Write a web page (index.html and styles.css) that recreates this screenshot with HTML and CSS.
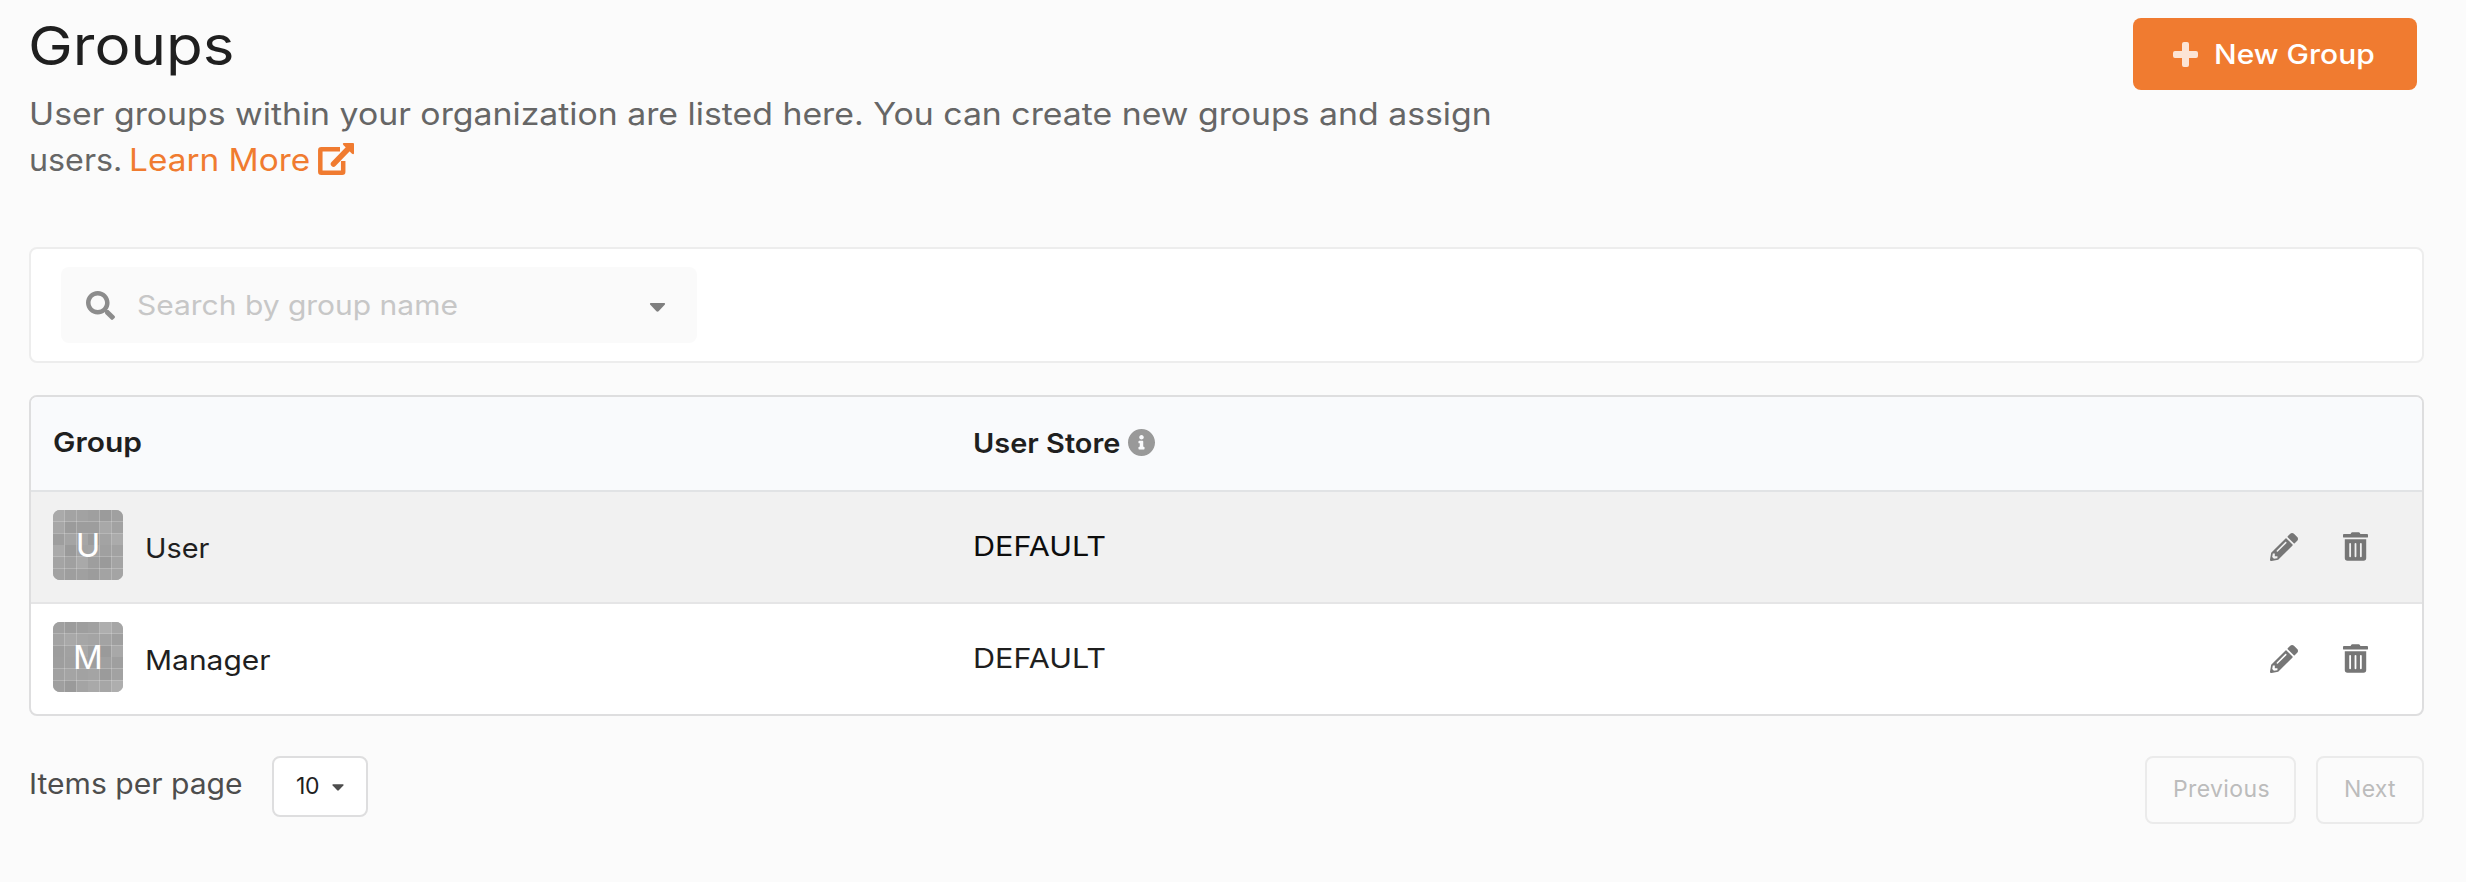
FILE: index.html
```html
<!DOCTYPE html>
<html lang="en">
<head>
<meta charset="utf-8">
<title>Groups</title>
<link rel="stylesheet" href="styles.css">
</head>
<body>
<svg class="defs" width="0" height="0" aria-hidden="true">
  <symbol id="pencil" viewBox="0 0 512 512"><path d="M497.9 142.1l-46.1 46.1c-4.7 4.7-12.3 4.7-17 0l-111-111c-4.7-4.7-4.7-12.3 0-17l46.1-46.1c18.7-18.7 49.1-18.7 67.9 0l60.1 60.1c18.8 18.7 18.8 49.1 0 67.9zM284.2 99.8L21.6 362.4.4 483.9c-2.9 16.4 11.4 30.6 27.8 27.8l121.5-21.3 262.6-262.6c4.7-4.7 4.7-12.3 0-17l-111-111c-4.8-4.7-12.4-4.7-17.1 0zM124.1 339.9c-5.5-5.5-5.5-14.3 0-19.8l154-154c5.5-5.5 14.3-5.5 19.8 0s5.5 14.3 0 19.8l-154 154c-5.5 5.5-14.3 5.5-19.8 0zM88 424h48v36.3l-64.5 11.3-31.1-31.1L51.7 376H88v48z"/></symbol>
  <symbol id="trash" viewBox="0 0 448 512"><path d="M32 464a48 48 0 0 0 48 48h288a48 48 0 0 0 48-48V128H32zm272-256a16 16 0 0 1 32 0v224a16 16 0 0 1-32 0zm-96 0a16 16 0 0 1 32 0v224a16 16 0 0 1-32 0zm-96 0a16 16 0 0 1 32 0v224a16 16 0 0 1-32 0zM432 32H312l-9.4-18.7A24 24 0 0 0 281.1 0H166.8a23.72 23.72 0 0 0-21.4 13.3L136 32H16A16 16 0 0 0 0 48v32a16 16 0 0 0 16 16h416a16 16 0 0 0 16-16V48a16 16 0 0 0-16-16z"/></symbol>
</svg>
<main class="page">
  <header class="header">
    <div class="heading">
      <h1 class="title wide">Groups</h1>
      <p class="description"><span class="lead wide">User groups within your organization are listed here. You can create new groups and assign</span> <span class="tail wide">users.</span> <a class="learn"><span class="learn-text wide">Learn More</span><svg class="external" viewBox="0 0 36 32"><path d="M22 6.3H3.3Q2.3 6.3 2.3 7.3V28.7Q2.3 29.7 3.3 29.7H24.2Q25.2 29.7 25.2 28.7V18" fill="none" stroke="currentColor" stroke-width="4.5"/><path d="M30.5 5.5L15.5 21" fill="none" stroke="currentColor" stroke-width="5.5" stroke-linecap="round"/><path d="M25.5 0H35Q36 0 36 1V10.5Q35.5 11.8 34 10.8L25.3 2Q24.2.5 25.5 0Z" fill="currentColor"/></svg></a></p>
    </div>
    <button class="new-group"><svg class="plus" viewBox="0 0 25 25"><path d="M11 0H14Q16 0 16 2V9H23Q25 9 25 11V14Q25 16 23 16H16V23Q16 25 14 25H11Q9 25 9 23V16H2Q0 16 0 14V11Q0 9 2 9H9V2Q9 0 11 0Z"/></svg><span class="wide">New Group</span></button>
  </header>

  <section class="filter">
    <div class="search">
      <svg class="magnifier" viewBox="0 0 512 512"><path d="M505 442.7L405.3 343c-4.5-4.5-10.6-7-17-7H372c27.6-35.3 44-79.7 44-128C416 93.1 322.9 0 208 0S0 93.1 0 208s93.1 208 208 208c48.3 0 92.7-16.4 128-44v16.3c0 6.4 2.5 12.5 7 17l99.7 99.7c9.4 9.4 24.6 9.4 33.9 0l28.3-28.3c9.4-9.4 9.4-24.6.1-34zM208 336c-70.7 0-128-57.2-128-128 0-70.7 57.2-128 128-128 70.7 0 128 57.2 128 128 0 70.7-57.2 128-128 128z"/></svg>
      <span class="placeholder wide">Search by group name</span>
      <svg class="caret caret-search" viewBox="0 0 18 10"><path d="M1.5 0H16.5Q18 .5 17 2L10.2 9.3Q9 10.4 7.8 9.3L1 2Q0 .5 1.5 0Z"/></svg>
    </div>
  </section>

  <section class="table">
    <div class="row head">
      <div class="cell"><span class="th-group wide">Group</span></div>
      <div class="cell"><span class="th-store wide">User Store</span><svg class="info" viewBox="8 8 496 496"><path d="M256 8C119.043 8 8 119.083 8 256c0 136.997 111.043 248 248 248s248-111.003 248-248C504 119.083 392.957 8 256 8zm0 110c23.196 0 42 18.804 42 42s-18.804 42-42 42-42-18.804-42-42 18.804-42 42-42zm56 254c0 6.627-5.373 12-12 12h-88c-6.627 0-12-5.373-12-12v-24c0-6.627 5.373-12 12-12h12v-64h-12c-6.627 0-12-5.373-12-12v-24c0-6.627 5.373-12 12-12h64c6.627 0 12 5.373 12 12v100h12c6.627 0 12 5.373 12 12v24z"/></svg></div>
    </div>
    <div class="row active">
      <div class="cell"><div class="avatar" data-tiles="aaa3a29f9ba0 a79b9d9da8a2 9ea4a69ba3ab aa9aa3a4a0a2 a4a0a99e9aa4 a29ea09ca3a4"><span class="letter">U</span></div><span class="name name-user wide">User</span></div>
      <div class="cell"><span class="store wide">DEFAULT</span></div>
      <div class="actions"><svg class="pencil"><use href="#pencil"/></svg><svg class="trash"><use href="#trash"/></svg></div>
    </div>
    <div class="row last">
      <div class="cell"><div class="avatar" data-tiles="a09c9ea1aea6 a3a8a6a4a39f 9da1a89d9aa8 9ea0a29ea09f a1a4a2a49ba2 9f9aa4a9a6ae"><span class="letter">M</span></div><span class="name wide">Manager</span></div>
      <div class="cell"><span class="store wide">DEFAULT</span></div>
      <div class="actions"><svg class="pencil"><use href="#pencil"/></svg><svg class="trash"><use href="#trash"/></svg></div>
    </div>
  </section>

  <footer class="footer">
    <div class="per-page"><span class="per-page-text wide">Items per page</span></div>
    <div class="select"><span>10</span><svg class="caret caret-select" viewBox="0 0 18 10"><path d="M1.5 0H16.5Q18 .5 17 2L10.2 9.3Q9 10.4 7.8 9.3L1 2Q0 .5 1.5 0Z"/></svg></div>
    <div class="pager">
      <button class="page-btn previous" disabled>Previous</button>
      <button class="page-btn next" disabled>Next</button>
    </div>
  </footer>
</main>
<script src="avatars.js"></script>
</body>
</html>
```
FILE: styles.css
```css
* { box-sizing: border-box; }
body {
  margin: 0;
  background: #fbfbfb;
  color: #1f1f1f;
  font-family: Inter, "Open Sans", sans-serif;
  font-size: 27.5px;
  line-height: 40px;
  overflow: hidden;
}
svg { flex: none; fill: currentColor; }
button { font: inherit; margin: 0; }
.defs { display: block; }
.page { padding: 0 42px 0 29px; }

/* Widened letterforms */
.wide {
  display: inline-block;
  white-space: nowrap;
  transform: scaleX(1.09);
  transform-origin: 0 50%;
}

.header {
  display: flex;
  justify-content: space-between;
  align-items: flex-start;
  height: 247px;
  padding: 15px 7px 0 0;
}
.heading { width: 1400px; }
.title {
  display: block;
  margin: 0 0 12px -1px;
  font-size: 54px;
  line-height: 62px;
  height: 64px;
  font-weight: 400;
  transform: scaleX(1.113);
}
.description {
  margin: 0;
  font-size: 31px;
  line-height: 46px;
  color: #666;
}
.tail { transform: scaleX(1.04); }
.learn { color: #f07b30; margin-left: 2px; }
.learn-text { transform: scaleX(1.077); }
.external { width: 36px; height: 32px; margin-left: 20px; vertical-align: -4px; }
.new-group {
  display: flex;
  align-items: center;
  gap: 16px;
  width: 284px;
  height: 72px;
  margin-top: 3px;
  padding: 0 0 0 40px;
  border: 0;
  border-radius: 8px;
  background: #f07b30;
  color: #fff;
  font-weight: 500;
}
.plus { width: 25px; height: 25px; opacity: .8; }

.filter {
  height: 116px;
  padding: 18px 30px;
  border: 2px solid #ededed;
  border-radius: 8px;
  background: #fff;
}
.search {
  display: flex;
  align-items: center;
  width: 636px;
  height: 76px;
  padding: 0 31px 0 25px;
  border-radius: 8px;
  background: #fafafa;
}
.magnifier { width: 29px; height: 29px; color: #8c8c8c; }
.placeholder { margin-left: 22px; color: #c7c7c7; }
.caret-search { width: 17px; height: 9px; margin: 5px 0 0 auto; color: #7f7f7f; }

.table {
  margin-top: 32px;
  border: 2px solid #dededf;
  border-radius: 8px;
  background: #fff;
  overflow: hidden;
}
.row {
  display: grid;
  grid-template-columns: 920px 1fr auto;
  height: 112px;
  padding: 0 54px 0 22px;
  border-bottom: 2px solid #e5e5e6;
}
.head { height: 95px; background: #f9fafc; font-weight: 600; border-bottom-color: #e1e3e5; }
.active { background: #f1f1f1; }
.last { height: 110px; border-bottom: 0; }
.cell, .actions { display: flex; align-items: center; }
.th-group { margin-bottom: 3px; }
.th-store { margin-bottom: 1px; transform: scaleX(1.052); }
.info { width: 27px; height: 27px; margin: 0 0 2px 15px; color: #999; }
.avatar {
  display: grid;
  width: 70px;
  height: 70px;
  margin-bottom: 4px;
  border-radius: 7px;
  background: #a2a2a2;
  overflow: hidden;
}
.avatar > * { grid-area: 1 / 1; }
.letter {
  color: #fff;
  font-size: 33px;
  line-height: 70px;
  text-align: center;
  z-index: 1;
}
.name { margin: 2px 0 0 22px; }
.name-user { transform: scaleX(1.05); }
.store { margin-bottom: 2px; transform: scaleX(1.112); }
.active .store { color: #0d0d0d; }
.actions { padding-bottom: 1px; color: #767676; }
.pencil { width: 28px; height: 28px; }
.trash { width: 25px; height: 29px; margin-left: 45px; }

.footer { display: flex; align-items: flex-start; margin-top: 40px; }
.per-page {
  width: 243px;
  margin-top: 8px;
  font-size: 28px;
  color: #4d4d4d;
}
.per-page-text { transform: scaleX(1.074); }
.select {
  display: flex;
  align-items: center;
  width: 96px;
  height: 61px;
  padding: 0 22px 2px;
  border: 2px solid #dededf;
  border-radius: 8px;
  background: #fff;
  font-size: 23px;
  letter-spacing: -.35px;
}
.caret-select { width: 12px; height: 7px; margin: 3px 0 0 13px; color: #4d4d4d; }
.pager { display: flex; gap: 20px; margin-left: auto; }
.page-btn {
  height: 68px;
  padding: 0 0 3px;
  border: 2px solid #ebebeb;
  border-radius: 8px;
  background: #fbfbfb;
  color: #bcbcbc;
  font-size: 23px;
}
.previous { width: 151px; padding-left: 2px; letter-spacing: .4px; }
.next { width: 108px; letter-spacing: .26px; }
```
FILE: avatars.js
```js
// Fills every avatar with a 6x6 mosaic of grey tiles and its grid lines.
const NS = 'http://www.w3.org/2000/svg';
const TILE = 70 / 6;
function rect(x, y, w, h, fill, opacity) {
  const r = document.createElementNS(NS, 'rect');
  r.setAttribute('x', x);
  r.setAttribute('y', y);
  r.setAttribute('width', w);
  r.setAttribute('height', h);
  r.setAttribute('fill', fill);
  if (opacity) r.setAttribute('opacity', opacity);
  return r;
}
document.querySelectorAll('.avatar').forEach(avatar => {
  const svg = document.createElementNS(NS, 'svg');
  svg.setAttribute('viewBox', '0 0 70 70');
  avatar.dataset.tiles.split(' ').forEach((row, y) => {
    row.match(/../g).forEach((tone, x) => {
      svg.append(rect(x * TILE, y * TILE, TILE + .3, TILE + .3, '#' + tone.repeat(3)));
    });
  });
  [11, 23, 46, 58].forEach(p => {
    svg.append(rect(p, 0, 1, 70, '#fff', .22));
    svg.append(rect(0, p, 70, 1, '#fff', .22));
  });
  avatar.prepend(svg);
});
```
